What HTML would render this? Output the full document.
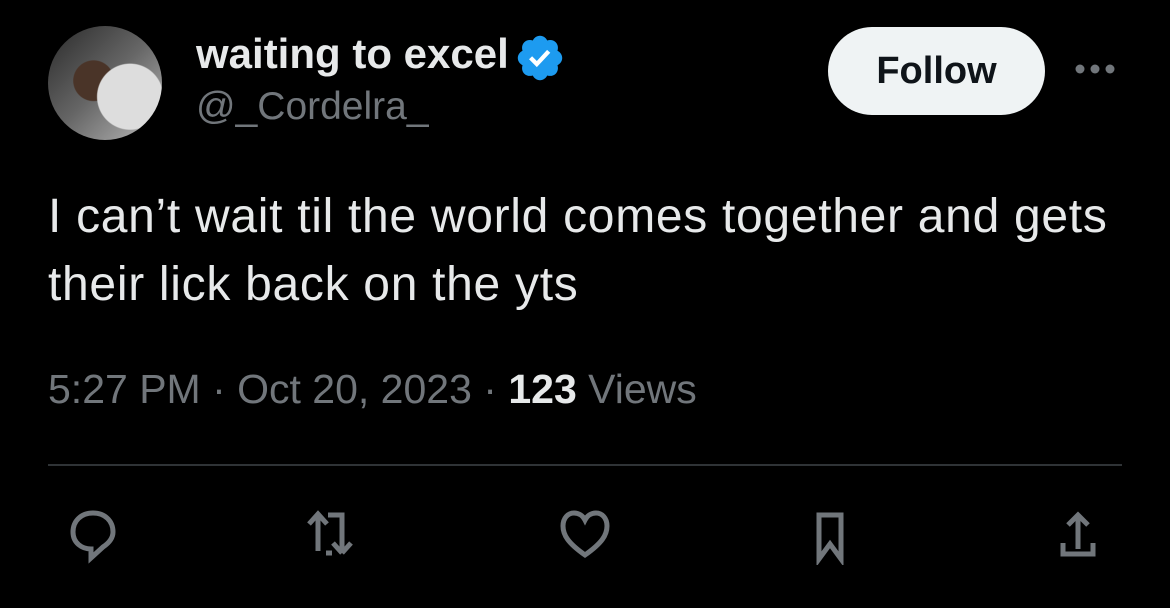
<!DOCTYPE html>
<html><head><style>
body{margin:0;width:1170px;height:608px;background:#000;font-family:"Liberation Sans",sans-serif;position:relative;overflow:hidden;color:#e7e9ea}
.a{position:absolute;white-space:nowrap}
</style></head><body>
<div class="a" style="left:48px;top:26px;width:114px;height:114px;border-radius:50%;background:radial-gradient(circle at 72% 62%,#ddd 0 30%,transparent 31%),radial-gradient(circle at 40% 48%,#4a3428 0 22%,transparent 23%),linear-gradient(135deg,#2a2a2a,#666 50%,#bbb);"></div>
<div class="a" style="left:196px;top:30px;font-size:42px;font-weight:bold;">waiting to excel</div>
<svg class="a" style="left:514px;top:32px" width="52" height="52" viewBox="0 0 24 24"><path fill="#1d9bf0" d="M22.25 12c0-1.43-.88-2.670-2.19-3.34.46-1.39.2-2.9-.81-3.91s-2.52-1.27-3.910-.81c-.66-1.31-1.910-2.19-3.34-2.19s-2.67.88-3.33 2.19c-1.4-.46-2.910-.2-3.920.81s-1.26 2.52-.8 3.910c-1.31.67-2.2 1.91-2.2 3.34s.89 2.670 2.2 3.34c-.46 1.39-.21 2.9.8 3.91s2.52 1.26 3.91.81c.67 1.31 1.91 2.19 3.34 2.19s2.68-.88 3.34-2.19c1.39.45 2.9.2 3.91-.81s1.27-2.52.81-3.91c1.31-.67 2.19-1.91 2.19-3.34z"/><path fill="#fff" d="M10.54 16.2l-3.6-3.6 1.42-1.42 2.18 2.19 4.73-5.14 1.48 1.36z"/></svg>
<div class="a" style="left:196px;top:85px;font-size:39px;color:#71767b;">@_Cordelra_</div>
<div class="a" style="left:828px;top:27px;width:217px;height:88px;border-radius:44px;background:#eff3f4;color:#0f1419;font-weight:bold;font-size:38px;line-height:88px;text-align:center">Follow</div>
<svg class="a" style="left:1074px;top:62px" width="46" height="14"><circle cx="6" cy="7" r="4.5" fill="#71767b"/><circle cx="21" cy="7" r="4.5" fill="#71767b"/><circle cx="36" cy="7" r="4.5" fill="#71767b"/></svg>
<div class="a" style="left:48px;top:183px;font-size:48px;line-height:68px;letter-spacing:0.7px">I can’t wait til the world comes together and gets<br>their lick back on the yts</div>
<div class="a" style="left:48px;top:366px;font-size:41px;color:#71767b;">5:27 PM · Oct 20, 2023 · <b style="color:#e7e9ea">123</b> Views</div>
<div class="a" style="left:48px;top:464px;width:1074px;height:2px;background:#2f3336"></div>
<svg class="a" style="left:60px;top:503px" width="1060" height="62" viewBox="0 0 1060 62" fill="none" stroke="#71767b" stroke-width="5">
<path d="M33 10c-12 0-20 8-20 19 0 11 9 17 18 17v9l12-11c6-4 10-9 10-15 0-11-8-19-20-19z"/>
<path d="M258 48V12M249 21l9-10 9 10M268 12h14v36M282 50l-9-10M282 50l9-10M272 50h-6"/>
<path d="M525 52C508 40 503 32 503 23c0-8 5-13 11-13 5 0 9 3 11 7 2-4 6-7 11-7 6 0 11 5 11 13 0 9-5 17-22 29z"/>
<path d="M759 56V12h22v44l-11-15z"/>
<path d="M1018 46V12M1008 22l10-10 10 10M1003 40v11h30V40"/>
</svg>
</body></html>
